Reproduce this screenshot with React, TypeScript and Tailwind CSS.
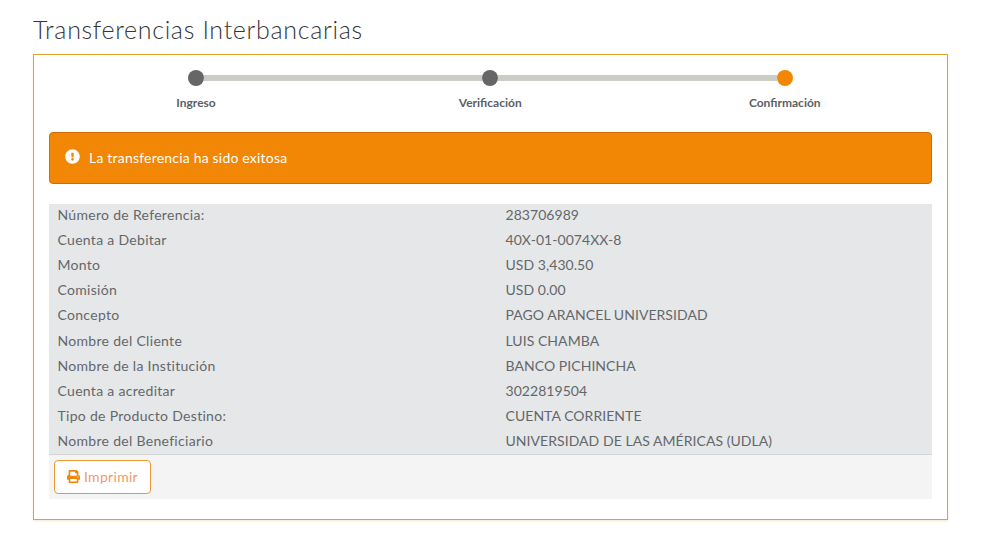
import { FaExclamationCircle, FaPrint } from "react-icons/fa";

const steps = ["Ingreso", "Verificación", "Confirmación"];

const rows = [
  ["Número de Referencia:", "283706989"],
  ["Cuenta a Debitar", "40X-01-0074XX-8"],
  ["Monto", "USD 3,430.50"],
  ["Comisión", "USD 0.00"],
  ["Concepto", "PAGO ARANCEL UNIVERSIDAD"],
  ["Nombre del Cliente", "LUIS CHAMBA"],
  ["Nombre de la Institución", "BANCO PICHINCHA"],
  ["Cuenta a acreditar", "3022819504"],
  ["Tipo de Producto Destino:", "CUENTA CORRIENTE"],
  ["Nombre del Beneficiario", "UNIVERSIDAD DE LAS AMÉRICAS (UDLA)"],
];

function Step({ label, index }: { label: string; index: number }) {
  const last = index === steps.length - 1;
  return (
    <div className="flex flex-col items-center">
      <div className="flex w-full items-center">
        <div className={`h-[6px] flex-1 ${index > 0 ? "bg-[#ccccc6]" : ""}`} />
        <div className={`h-4 w-4 rounded-full ${last ? "bg-[#f28705]" : "bg-[#666666]"}`} />
        <div className={`h-[6px] flex-1 ${!last ? "bg-[#ccccc6]" : ""}`} />
      </div>
      <div className="mt-[9px] text-[12px] font-bold leading-[15px] text-[#5c6066]">{label}</div>
    </div>
  );
}

export default function App() {
  return (
    <div className="h-[560px] w-[985px] overflow-hidden bg-white pl-[33px] pr-[37px] pt-[14px] font-['Lato',sans-serif] text-[#63676b]">
      <h1 className="text-[25px] font-light leading-[30px] tracking-[0.67px] text-[#33373b]">
        Transferencias Interbancarias
      </h1>
      <div className="mt-[10px] h-[466px] border border-[#e2a031] px-[15px] pt-[15px] shadow-[0_1px_2px_rgba(226,160,49,0.25)]">
        <div className="grid grid-cols-[294px_294.5px_1fr]">
          {steps.map((label, i) => (
            <Step key={label} label={label} index={i} />
          ))}
        </div>
        <div className="mt-[22px] flex h-[52px] items-center rounded border border-[#d2690a] bg-[#f28705] pb-[2px] pl-[15px] text-[14px] tracking-[0.2px] text-white">
          <FaExclamationCircle className="mb-[2px] text-[15px]" />
          <span className="ml-[9px]">La transferencia ha sido exitosa</span>
        </div>
        <div className="mt-[20px] h-[250px] bg-[#e6e7e9] text-[14px]">
          {rows.map(([label, value]) => (
            <div key={label} className="grid h-[25.12px] grid-cols-2 leading-[21px]">
              <div className="pl-[8.5px] tracking-[0.3px]">{label}</div>
              <div className="pl-[15px] tracking-[0.05px]">{value}</div>
            </div>
          ))}
        </div>
        <div className="h-[45px] border-t border-[#d4d5d6] bg-[#f4f4f4] pl-[5px] pt-[5px]">
          <button className="flex h-[34px] w-[97px] items-center rounded border border-[#e99a34] bg-white pb-[1px] pl-[12px] text-[14px] tracking-[0.3px] text-[#ee9a68]">
            <FaPrint className="mr-[4px] text-[13px] text-[#f28705]" />
            Imprimir
          </button>
        </div>
      </div>
    </div>
  );
}
